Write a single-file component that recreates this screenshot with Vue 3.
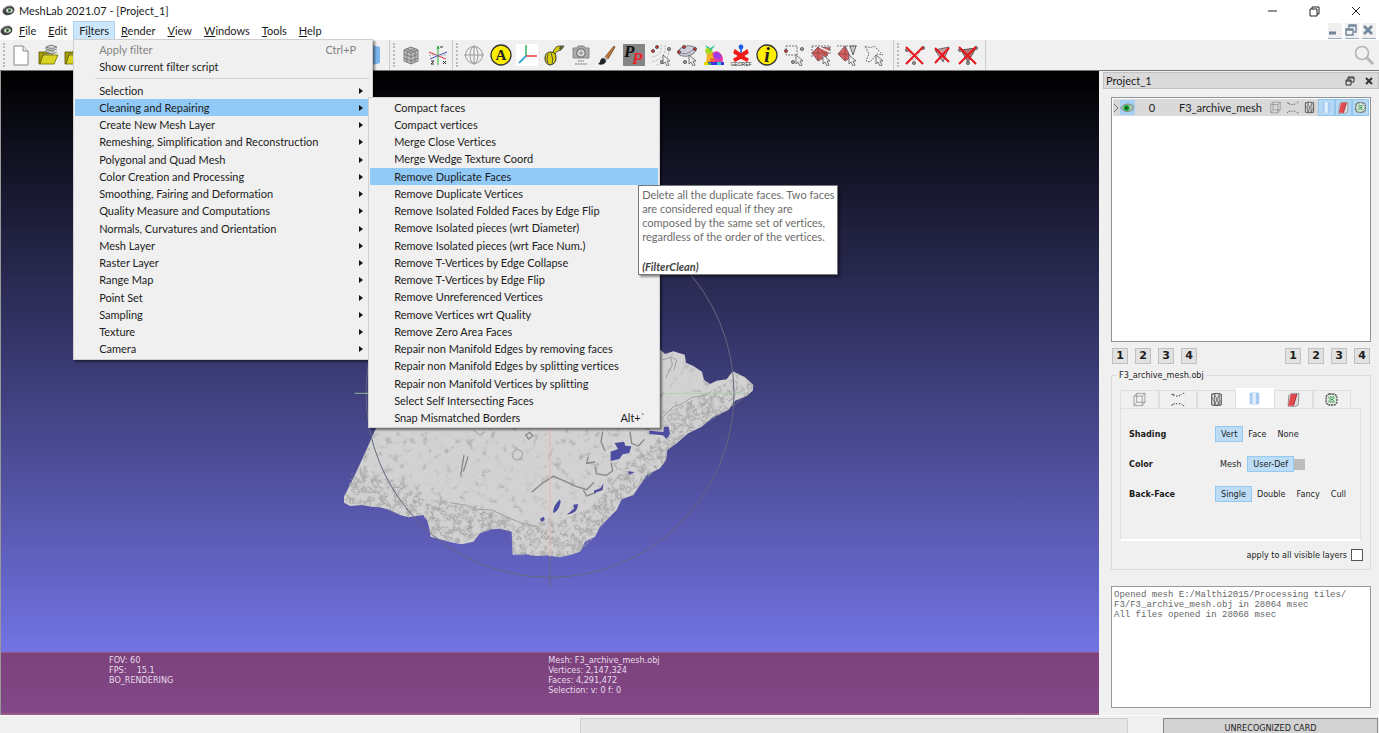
<script setup>
import { ref } from 'vue'

const menus = [
  { pre: '', key: 'F', post: 'ile' },
  { pre: '', key: 'E', post: 'dit' },
  { pre: 'Fi', key: 'l', post: 'ters', open: true },
  { pre: '', key: 'R', post: 'ender' },
  { pre: '', key: 'V', post: 'iew' },
  { pre: '', key: 'W', post: 'indows' },
  { pre: '', key: 'T', post: 'ools' },
  { pre: '', key: 'H', post: 'elp' },
]

const filterGroups = [
  'Selection', 'Cleaning and Repairing', 'Create New Mesh Layer',
  'Remeshing, Simplification and Reconstruction', 'Polygonal and Quad Mesh',
  'Color Creation and Processing', 'Smoothing, Fairing and Deformation',
  'Quality Measure and Computations', 'Normals, Curvatures and Orientation',
  'Mesh Layer', 'Raster Layer', 'Range Map', 'Point Set', 'Sampling', 'Texture', 'Camera',
]

const cleaning = [
  'Compact faces', 'Compact vertices', 'Merge Close Vertices', 'Merge Wedge Texture Coord',
  'Remove Duplicate Faces', 'Remove Duplicate Vertices',
  'Remove Isolated Folded Faces by Edge Flip', 'Remove Isolated pieces (wrt Diameter)',
  'Remove Isolated pieces (wrt Face Num.)', 'Remove T-Vertices by Edge Collapse',
  'Remove T-Vertices by Edge Flip', 'Remove Unreferenced Vertices',
  'Remove Vertices wrt Quality', 'Remove Zero Area Faces',
  'Repair non Manifold Edges by removing faces', 'Repair non Manifold Edges by splitting vertices',
  'Repair non Manifold Vertices by splitting', 'Select Self Intersecting Faces',
  'Snap Mismatched Borders',
]

const cursor = '<path d="M13 11v9l2-2 2 4 2-1-2-4h3z" fill="#eee" stroke="#666" stroke-width=".9"/>'
const dot = (x, y, c = '#999') => `<circle cx="${x}" cy="${y}" r="1.6" fill="${c}" stroke="#444" stroke-width=".7"/>`
const cross = '<path d="M2 3l17 17M19 3L2 20" stroke="#e8141c" stroke-width="2" fill="none"/>'
const folder = '<path d="M2 8h7l2-2h5v4H6L3 20H2z" fill="#a8a000" stroke="#555200" stroke-width=".8"/><path d="M6 11h15l-4 9H3z" fill="#d9d322" stroke="#6d6900" stroke-width=".8"/>'

const art = {
  doc: '<path d="M4 2h9l5 5v14H4z" fill="#fff" stroke="#888"/><path d="M13 2v5h5" fill="#eee" stroke="#888"/>',
  open: folder,
  openStack: folder + '<path d="M9 3l5-2 6 2-5 2zM9 3v2l6 2 5-2M9 6v2l6 2 5-2" fill="#ccc" stroke="#777" stroke-width=".9"/>',
  cylinder: '<path d="M3 3q8-3 16 0v16q-8 3-16 0z" fill="#7db4ec"/><path d="M3 3q8-3 9-1v19q-6 0-9-2z" fill="#b5d6f7"/>',
  layers: '<path d="M4 5l7-2 7 2v12l-7 3-7-3z" fill="#bbb"/><path d="M4 6l7 3 7-3M4 10l7 3 7-3M4 14l7 3 7-3M4 6v11l7 3 7-3V6M11 9v11M7 7v11M15 7v11M4 6l7-3 7 3M7 5l8 3M15 5L7 8" fill="none" stroke="#777" stroke-width=".9"/>',
  axis: '<path d="M11 21V3m-1 2l1-3 1 3" stroke="#2fae3a" fill="none"/><path d="M2 8l17 7" stroke="#d82c3a"/><path d="M20 8L3 15" stroke="#4050c8"/><path d="M2 11h18" stroke="#aaa" stroke-dasharray="2 1"/><path d="M13 3h3M4 17h3l-3 3h3M16 17l3 3m0-3l-3 3" stroke="#333" fill="none"/>',
  globe: '<g fill="none" stroke="#999"><circle cx="11" cy="11" r="8.5"/><ellipse cx="11" cy="11" rx="4" ry="8.5"/><path d="M1 11h20M11 1v20"/></g>',
  label: '<circle cx="11" cy="11" r="10" fill="#ffee00" stroke="#333" stroke-width="1.3"/><text x="11" y="16" text-anchor="middle" font-family="Liberation Serif, serif" font-weight="bold" font-size="15" fill="#222">A</text>',
  axes: '<path fill="#fff" d="M0 0h22v22H0z"/><path d="M10 1v11" stroke="#3dba6b" stroke-width="1.6"/><path d="M10 12h11" stroke="#ee4444" stroke-width="1.6"/><path d="M10 12l-7 7" stroke="#35a5dc" stroke-width="1.8"/>',
  tape: '<path d="M10 9q1-6 6-7h5l-3 4q-4 0-6 4z" fill="#d9cf00" stroke="#333" stroke-width=".8"/><path d="M17 2h4l-3 4-2-1z" fill="#5d5a30"/><path d="M2 14q0-6 6-6 5 0 5 6 0 6-6 7-5-1-5-7z" fill="#d9cf00" stroke="#333"/><path d="M5 10q-2 5 0 10M8 9q3 6 1 12" stroke="#555" fill="none"/>',
  camera: '<path d="M3 4h4l1-2h6l1 2h4v10H3z" fill="#aaa" stroke="#888"/><circle cx="11" cy="9" r="4.2" fill="#ddd" stroke="#777" stroke-width="1.2"/><circle cx="11" cy="9" r="1.8" fill="#999"/><path d="M8 17h6M5 20h12" stroke="#777" stroke-width="1.2" stroke-dasharray="2 .6"/>',
  brush: '<path d="M18 2l1 1-7 12-3-2z" fill="#c07838" stroke="#6c3b15" stroke-width=".8"/><path d="M9 12l3 3-2 2-3-2z" fill="#bbb"/><path d="M7 14q3 1 3 4-3 4-8 2 2-1 2-3 1-3 3-3z" fill="#222"/>',
  pp: '<path fill="#858585" d="M0 0h22v22H0z"/><text x="1" y="13" font-family="Liberation Serif, serif" font-style="italic" font-weight="bold" font-size="17" fill="#111">P</text><text x="9" y="20" font-family="Liberation Serif, serif" font-style="italic" font-weight="bold" font-size="17" fill="#e8262c">P</text>',
  pick: '<g fill="none" stroke="#aaa" stroke-width=".8" stroke-dasharray="2 1"><path d="M11 1q2 11-10 12M15 1q2 14-14 17M19 6q-1 13-13 15"/></g>' + dot(3, 7, '#c33') + dot(7, 3, '#c33') + dot(19, 5) + dot(12, 18) + cursor,
  pickLine: '<ellipse cx="11" cy="7" rx="9" ry="5" fill="#ccd" stroke="#888" transform="rotate(-12 11 7)"/><path d="M2 8q9 5 17-4" stroke="#888" fill="none"/>' + dot(3, 8, '#c33') + dot(8, 3, '#c33') + dot(19, 5, '#c33') + dot(9, 18) + cursor,
  bunny: '<path d="M8 10q4-4 8-2 4 3 4 8l-1 3H7z" fill="#e03ca8"/><path d="M11 9q5-2 7 3l-1 3-6-1z" fill="#9a3ce8"/><path d="M2 7q1-4 5-3l3 3-1 4-5 0z" fill="#a8d820"/><path d="M6 5l6-4-1 2-4 4zM4 4L2 1l5 3z" fill="#1fc48c"/><path d="M4 10l5-1 2 6-5 5H3z" fill="#f0b020"/><path d="M8 14l4 1-1 4H6z" fill="#f06030"/><path d="M1 18h20v3H1z" fill="#3a32e0"/><path d="M1 18h4v3H1z" fill="#e5d800"/><path d="M5 19h3v2H5z" fill="#38c848"/><path d="M14 18h4v3h-4z" fill="#28c8c8"/>',
  georef: '<circle cx="11" cy="3" r="2.4" fill="#1d5be6"/><path d="M11 5v4" stroke="#1d5be6" stroke-width="1.6"/><path d="M5 6l6 4 6-4 1 3-5 3 5 3-1 2-6-3-6 3-1-2 5-3-5-3z" fill="#f01818" stroke="#f01818" stroke-width="1.4"/><text x="11" y="22" text-anchor="middle" font-family="Liberation Sans, sans-serif" font-size="5" fill="#222">GEOREF</text>',
  info: '<circle cx="11" cy="11" r="10" fill="#ffee00" stroke="#333" stroke-width="1.3"/><text x="11" y="18" text-anchor="middle" font-family="Liberation Serif, serif" font-style="italic" font-weight="bold" font-size="20" fill="#222">i</text>',
  selVert: '<path d="M3 2h11v9H3z" fill="none" stroke="#777" stroke-dasharray="2 1"/>' + dot(3, 7, '#c33') + dot(19, 5) + dot(10, 18) + cursor,
  selFace: '<path d="M2 2h18v9M2 2v12" fill="none" stroke="#777" stroke-dasharray="2 1"/><path d="M2 9l6-6 12 1-3 8-9 5z" fill="#d86060" stroke="#6b4b4b" stroke-width=".8"/><path d="M9 3l11 5" stroke="#eee" stroke-width="1.4"/><path d="M8 3l9 9M2 9h15M8 17V3" stroke="#844" stroke-width=".8"/>' + cursor,
  selConn: '<path d="M2 10L9 2l4 8 1 4-5 3z" fill="#d86060" stroke="#6b4b4b" stroke-width=".8"/><path d="M2 10h11M9 2v15" stroke="#844" stroke-width=".8"/><path d="M14 2l6 0-3 9z" fill="#ccc" stroke="#666"/><path d="M1 2h20" stroke="#777" stroke-dasharray="2 1"/>' + cursor,
  selLasso: '<path d="M2 2q5 3 9 0l9 9-6-1-7 8-4-1 3-7z" fill="none" stroke="#777" stroke-dasharray="2 1"/>' + cursor,
  delVert: dot(3, 6) + dot(19, 4) + dot(10, 19) + '<path d="M4 6l6 12L18 4" fill="none" stroke="#999" stroke-dasharray="1 1"/>' + cross,
  delFace: '<path d="M4 6l14-3-6 15z" fill="#c99" stroke="#666"/><path d="M4 6l9 6" stroke="#666"/><path d="M4 4l14 14M18 4L4 19" stroke="#e8141c" stroke-width="2"/>',
  delBoth: '<path d="M4 6l15-2-8 14z" fill="#b77" stroke="#555"/>' + dot(3, 6) + dot(19, 4) + dot(11, 19) + cross,
  box: '<g fill="none" stroke="#808080"><path d="M3 6h12v14H3zM7 2h12v13H7zM3 6l4-4M15 6l4-4M3 20l4-5M15 20l4-5"/></g>',
  points: '<path d="M2 3l2 1M5 3l1 3M9 6h2M13 5l2 1M16 3l1 1M20 1v2M2 20l2-2M5 17l2 1M9 16l1 2M13 17h2M17 18l1 1M20 19v2" stroke="#555" stroke-width="1.6"/>',
  wire: '<path d="M4 3q7-2 14 0v16q-7 2-14 0z" fill="#ddd" stroke="#444" stroke-width="1.4"/><path d="M8 3v16M15 3v16M4 7l7 13M8 3l7 16M8 19l7-15M11 20l7-8" fill="none" stroke="#555"/>',
  solid: '<path d="M4 3q7-2 14 0v16q-7 2-14 0z" fill="#a8cbf2"/><path d="M8 2h5v18H8z" fill="#e3f0fd"/>',
  ribbon: '<path d="M4 5l4-3h11l-1 17-4 2H3z" fill="#ddd" stroke="#777"/><path d="M7 3h9L11 20H3z" fill="#e04a50"/><path d="M16 3l-5 17" stroke="#922" stroke-width="1.2"/>',
  edges: '<rect x="3" y="3" width="16" height="16" rx="5" fill="#dcebdc" stroke="#555" stroke-width="2" stroke-dasharray="3 1"/><path d="M6 7l4 4-4 4M16 7l-4 4 4 4M9 6l2 3 3-3M9 16l2-3 3 3M10 11h3" stroke="#35914a" stroke-width="1.4" fill="none"/>',
}

const mainTools = [
  'globe', 'label', 'axes', 'tape', 'camera', 'brush', 'pp', 'pick', 'pickLine', 'bunny',
  'georef', 'info', 'selVert', 'selFace', 'selConn', 'selLasso',
]
const layerModes = ['box', 'points', 'wire', 'solid', 'ribbon', 'edges']

const options = [
  { name: 'Shading', values: ['Vert', 'Face', 'None'], chosen: 'Vert' },
  { name: 'Color', values: ['Mesh', 'User-Def'], chosen: 'User-Def', swatch: true },
  { name: 'Back-Face', values: ['Single', 'Double', 'Fancy', 'Cull'], chosen: 'Single' },
]
const applyAll = ref(false)
const log = ref('Opened mesh E:/Malthi2015/Processing tiles/\nF3/F3_archive_mesh.obj in 28064 msec\nAll files opened in 28068 msec')
</script>

<template>
  <div class="window">
    <header class="titlebar">
      <svg class="logo" viewBox="0 0 14 14"><ellipse cx="7" cy="7" rx="6.5" ry="5" fill="#444" transform="rotate(-20 7 7)" /><ellipse cx="8" cy="7" rx="3.6" ry="2.4" fill="#cfe5cf" /><circle cx="8" cy="7" r="1.5" fill="#2d5b35" /><path d="M1 6q4-5 10-4" stroke="#aaa" fill="none" /></svg>
      <h1>MeshLab 2021.07 - [Project_1]</h1>
      <div class="win-buttons">
        <button aria-label="Minimize"><svg viewBox="0 0 12 12"><path d="M2 6h9" /></svg></button>
        <button aria-label="Restore"><svg viewBox="0 0 12 12"><path d="M2 4h7v7H2zM4 4V2h7v7H9" /></svg></button>
        <button aria-label="Close"><svg viewBox="0 0 12 12"><path d="M2 2l8 8M10 2l-8 8" /></svg></button>
      </div>
    </header>

    <nav class="menubar">
      <svg class="logo" viewBox="0 0 14 14"><ellipse cx="7" cy="7" rx="6.5" ry="5" fill="#444" transform="rotate(-20 7 7)" /><ellipse cx="8" cy="7" rx="3.6" ry="2.4" fill="#cfe5cf" /><circle cx="8" cy="7" r="1.5" fill="#2d5b35" /><path d="M1 6q4-5 10-4" stroke="#aaa" fill="none" /></svg>
      <ul class="menus">
        <li v-for="m in menus" :key="m.post">
          <button class="menu" :class="{ open: m.open }">{{ m.pre }}<u>{{ m.key }}</u>{{ m.post }}</button>
          <div v-if="m.open" class="popup filters">
            <button class="item" disabled>Apply filter<kbd>Ctrl+P</kbd></button>
            <button class="item">Show current filter script</button>
            <hr />
            <ul class="entries">
              <li v-for="g in filterGroups" :key="g">
                <button class="item" :class="{ lit: g === 'Cleaning and Repairing' }">{{ g }}<i class="arrow"></i></button>
              </li>
            </ul>
            <div class="popup sub">
              <ul class="entries">
                <li v-for="c in cleaning" :key="c">
                  <button class="item" :class="{ lit: c === 'Remove Duplicate Faces' }">{{ c }}<kbd v-if="c === 'Snap Mismatched Borders'">Alt+`</kbd></button>
                </li>
              </ul>
              <div class="tooltip" role="tooltip">
                <p>Delete all the duplicate faces. Two faces<br />are considered equal if they are<br />composed by the same set of vertices,<br />regardless of the order of the vertices.</p>
                <p><strong>(FilterClean)</strong></p>
              </div>
            </div>
          </div>
        </li>
      </ul>
      <div class="mdi">
        <button aria-label="Minimize project"><svg viewBox="0 0 13 14"><path d="M1 10h7" stroke-width="3" /></svg></button>
        <button aria-label="Restore project"><svg viewBox="0 0 13 14"><path d="M1 6h7v6H1zM1 7h7M4 5V2h7v7H9M4 3h7" stroke-width="1.4" /></svg></button>
        <button aria-label="Close project"><svg viewBox="0 0 13 14"><path d="M2 3l8 8M10 3l-8 8" stroke-width="2.6" /></svg></button>
      </div>
    </nav>

    <div class="toolbar">
      <div class="tools files">
        <button v-for="n in ['doc', 'openStack', 'open']" :key="n" class="tool" :aria-label="n"><svg viewBox="0 0 22 22" v-html="art[n]"></svg></button>
        <button class="tool last" aria-label="cylinder"><svg viewBox="0 0 22 22" v-html="art.cylinder"></svg></button>
      </div>
      <div class="tools view">
        <button v-for="n in ['layers', 'axis']" :key="n" class="tool" :aria-label="n"><svg viewBox="0 0 22 22" v-html="art[n]"></svg></button>
      </div>
      <div class="tools main">
        <button v-for="n in mainTools" :key="n" class="tool" :aria-label="n"><svg viewBox="0 0 22 22" v-html="art[n]"></svg></button>
      </div>
      <div class="tools">
        <button v-for="n in ['delVert', 'delFace', 'delBoth']" :key="n" class="tool" :aria-label="n"><svg viewBox="0 0 22 22" v-html="art[n]"></svg></button>
      </div>
      <button class="search" aria-label="Search"><svg viewBox="0 0 22 22"><circle cx="9" cy="9" r="6.5" fill="none" stroke="#b4b4b4" stroke-width="1.6" /><path d="M14 14l6 6" stroke="#b4b4b4" stroke-width="3" /></svg></button>
    </div>

    <main class="work">
      <section class="viewport">
        <svg class="scene" viewBox="0 0 1290 960">
          <defs>
            <filter id="fine" x="0" y="0" width="1" height="1">
              <feTurbulence type="fractalNoise" baseFrequency=".045" numOctaves="5" seed="7" />
              <feColorMatrix values="0 0 0 0 .45 0 0 0 0 .45 0 0 0 0 .45 1 0 0 0 0" />
              <feComponentTransfer><feFuncA type="table" tableValues="0 0 0 0 0 0 0 0 0 .05 .15 .5 .8 .9 .9 .9 .9" /></feComponentTransfer>
              <feComposite in2="SourceGraphic" operator="in" />
            </filter>
            <filter id="rough" x="0" y="0" width="1" height="1">
              <feTurbulence type="fractalNoise" baseFrequency=".05" numOctaves="4" seed="3" />
              <feColorMatrix values="0 0 0 0 .35 0 0 0 0 .35 0 0 0 0 .35 1 0 0 0 0" />
              <feComponentTransfer><feFuncA type="table" tableValues="0 0 0 0 0 .05 .2 .8 .15 .05 .2 .6 .6" /></feComponentTransfer>
              <feComposite in2="SourceGraphic" operator="in" />
            </filter>
          </defs>
          <path id="slab" class="rock" d="M110 500L70 590 40 655 12 710 12 728 30 738 65 735 95 740 120 742 150 750 180 765 205 772 250 765 262 782 268 805 272 830 300 838 340 848 365 853 400 845 420 820 450 808 480 806 515 815 518 885 555 882 590 888 620 886 660 892 690 885 720 875 735 845 765 830 780 800 800 780 830 750 845 718 880 705 900 675 920 645 960 625 978 600 982 570 1010 550 1045 520 1085 500 1120 470 1165 450 1185 422 1220 408 1238 392 1240 375 1215 352 1178 334 1160 358 1130 362 1110 372 1092 360 1086 335 1060 318 1038 308 1034 284 1000 274 975 282 958 266 900 300 800 480z" />
          <use href="#slab" filter="url(#fine)" />
          <path filter="url(#rough)" d="M12 728L35 640 70 615 130 650 200 670 240 715 330 725 390 745 480 760 540 790 620 800 690 770 760 740 830 650 880 600 960 530 990 450 1040 430 1090 400 1180 360 1240 375 1238 392 1165 450 1045 520 982 570 978 600 900 675 845 718 765 830 720 875 660 892 518 885 515 815 480 806 420 820 365 853 272 830 250 765 205 772 120 742z" />
          <g class="cracks">
            <path d="M575 697l30-26 35-22 38 16 30 14 32 10 22-22M372 585l-10 62M384 590l-14 45M557 525l12-8 9 10-12 10zM788 515l-5 30 12 28M870 515l5 35 20 8 18-20M745 590l-5 20 25-4M765 620l5 22 30 4 18-14-5-24M730 690l10 18 28-10" />
            <path class="faint" d="M330 728l50 8 30 12 45 2 40 18 45 20 50 12M400 510l20 15 15-10M970 470l30-30 25-8 30-20 40-5 20-14M520 575l14-8 14 10-3 18-17 6-10-8zM967 300l25-8 5 22-20 40M990 290l20 10-8 30" />
          </g>
          <path class="holes" d="M928 512l42 4 2-16 14 0 4 22-10 14-12-10-40-4zM812 575l22-8-10-18 28-4 4 12 18 2-6 20-20 4-10 14-26 6zM864 634l20 2-16 8zM640 760q-3-20 20-42l2 8q-6 28-22 34zM680 764l22-18-2-12 14-2q0 28-34 32zM600 776l12-6 2 10-10 6zM762 692l20-8 8-14-2 20-26 10z" />
          <circle class="orbit" cx="630" cy="400" r="552" />
          <path class="orbit" d="M630 890v90" />
          <path d="M630 505v385" stroke="#eab8b8" stroke-width="3" />
          <path d="M44 400h45M960 400h250" stroke="#a6d3a6" stroke-width="3" opacity=".8" />
        </svg>
        <div class="hud">
          <p>FOV: 60<br />FPS: &nbsp;&nbsp; 15.1<br />BO_RENDERING</p>
          <p>Mesh: F3_archive_mesh.obj<br />Vertices: 2,147,324<br />Faces: 4,291,472<br />Selection: v: 0 f: 0</p>
        </div>
      </section>

      <aside class="dock">
        <header class="dock-title">
          <h2>Project_1</h2>
          <button aria-label="Float"><svg viewBox="0 0 10 10"><path d="M1 4h5v5H1zM1 5h5M3 4V1h6v5H6M3 2h6" /></svg></button>
          <button aria-label="Close dock"><svg viewBox="0 0 10 10"><path d="M2 2l6 6M8 2L2 8" stroke-width="2" /></svg></button>
        </header>
        <div class="dock-body">
          <div class="tree">
            <div class="layer">
              <svg class="chev" viewBox="0 0 6 10"><path d="M1 1l4 4-4 4" fill="none" stroke="#777" /></svg>
              <button class="eye" aria-label="Toggle visibility"><svg viewBox="0 0 14 14"><path d="M0 7q6-7 13-2l-1 4q-6 4-12-2z" fill="#a8c8a8" stroke="#777" stroke-width=".8" /><circle cx="6" cy="7" r="3" fill="#1cae3c" /><circle cx="6" cy="7" r="1.4" fill="#114d1d" /></svg></button>
              <span class="id">0</span>
              <span class="name">F3_archive_mesh</span>
              <button v-for="(n, i) in layerModes" :key="n" class="mode" :class="{ on: i > 2 }" :aria-label="n"><svg viewBox="0 0 22 22" v-html="art[n]"></svg></button>
            </div>
          </div>
          <div class="slots">
            <div v-for="s in 2" :key="s"><button v-for="n in 4" :key="n">{{ n }}</button></div>
          </div>
          <fieldset class="panel">
            <legend>F3_archive_mesh.obj</legend>
            <div class="tabs">
              <button v-for="n in layerModes" :key="n" :class="{ active: n === 'solid' }" :aria-label="n"><svg viewBox="0 0 22 22" v-html="art[n]"></svg></button>
            </div>
            <div class="pane">
              <div v-for="o in options" :key="o.name" class="option">
                <strong>{{ o.name }}</strong>
                <button v-for="v in o.values" :key="v" :class="{ chosen: v === o.chosen }">{{ v }}</button>
                <i v-if="o.swatch" class="swatch"></i>
              </div>
            </div>
            <label class="apply">apply to all visible layers<input v-model="applyAll" type="checkbox" /></label>
          </fieldset>
          <textarea v-model="log" class="log" readonly aria-label="Log"></textarea>
        </div>
      </aside>
    </main>

    <footer class="status">
      <div class="progress"></div>
      <button class="card">UNRECOGNIZED CARD</button>
    </footer>
  </div>
</template>

<style>
body { margin: 0; overflow: hidden; }
</style>

<style scoped>
* { box-sizing: border-box; margin: 0; padding: 0; }
ul { list-style: none; }
button { border: 0; background: none; font: inherit; font-variant-ligatures: none; color: inherit; text-align: left; white-space: nowrap; }
svg { display: block; }
.window {
  height: 100vh; display: flex; flex-direction: column; overflow: hidden;
  background: #f0f0f0; color: #1c1c1c; font: 11px/17px Lato, "Open Sans", sans-serif; font-variant-ligatures: none;
}
.titlebar { display: flex; align-items: center; height: 21px; background: #fff; padding-left: 2px; }
.titlebar h1 { font-size: 11px; font-weight: 400; margin-left: 4px; }
.logo { width: 13px; height: 13px; }
.win-buttons { margin-left: auto; display: flex; gap: 30px; padding-right: 17px; }
.win-buttons svg { width: 12px; height: 12px; fill: none; stroke: #222; }
.menubar { display: flex; align-items: center; height: 19px; background: #fff; }
.menus { display: flex; }
.menus > li { position: relative; }
.menu { height: 19px; padding: 0 6px; line-height: 18px; border: 0; }
.menu u { text-underline-offset: 1px; }
.menu.open { background: #cce6fb; box-shadow: inset 0 0 0 1px #a5d2f5; }
.mdi { margin-left: auto; display: flex; gap: 3px; padding-right: 3px; }
.mdi button { width: 14px; height: 16px; background: #f0f0f0; border-bottom: 1px solid #9fb0c4; }
.mdi svg { width: 13px; height: 14px; fill: none; stroke: #71859b; }

.popup { position: absolute; background: #f0f0f0; border: 1px solid #cfcfcf; box-shadow: 2px 2px 2px #0007; padding: 1px; }
.filters { z-index: 5; left: 0; top: 18px; width: 300px; padding-right: 3px; }
.sub { left: 294px; top: 57px; width: 292px; }
.item { display: flex; justify-content: space-between; width: 100%; height: 17px; line-height: 17px; padding: 0 13px 0 24px; }
.entries li:nth-child(4n) .item { height: 18px; }
.item:disabled { color: #838383; }
.item kbd { font: inherit; }
.item.lit { background: #91c9f7; }
.filters hr { border: 0; border-top: 1px solid #d4d4d4; margin: 3px 0 3px 20px; }
.arrow { align-self: center; border: 3px solid transparent; border-left: 4px solid #111; border-right: 0; margin-right: -8px; }
.filters > .entries .item { padding-right: 14px; }
.tooltip {
  position: absolute; left: 269px; top: 87px; width: 200px; padding: 2px 3px 0; background: #fff;
  border: 1px solid #777; box-shadow: 2px 2px 2px #0006; color: #6c6c6c; line-height: 14px; white-space: nowrap;
}
.tooltip p + p { margin-top: 15px; line-height: 15px; font-style: italic; color: #444; }

.toolbar { display: flex; align-items: center; height: 31px; border-bottom: 1px solid #777; }
.tools { display: flex; height: 30px; align-items: center; border-right: 1px solid #ccc; padding: 0 4px 0 7px; position: relative; }
.tools::before { content: ""; position: absolute; left: 3px; top: 3px; bottom: 3px; border-left: 2px dotted #bbb; }
.files { width: 390px; }
.view { padding-right: 1px; }
.main { padding-right: 6px; }
.files .last { margin-left: auto; }
.tool { width: 27px; height: 24px; display: flex; align-items: center; justify-content: center; }
.tool:nth-child(3n) { width: 26px; }
.tool svg { width: 22px; height: 22px; flex: none; }
.search { margin-left: auto; padding-right: 4px; }
.search svg { width: 22px; height: 22px; }

.work { flex: 1; display: flex; min-height: 0; }
.viewport { flex: 1; position: relative; overflow: hidden; background: linear-gradient(#000, #7f7ffc); border-left: 1px solid #999; }
.scene { position: absolute; left: 339px; top: 189px; width: 430px; height: 320px; overflow: visible; }
.rock { fill: #d2d2d2; }
.cracks { fill: none; stroke: #888; stroke-width: 4; }
.cracks .faint { stroke: #a0a0a0; stroke-width: 3; }
.holes { fill: #4c4ca0; }
.orbit { fill: none; stroke: #66667e; stroke-width: 3; }
.hud {
  position: absolute; inset: auto 0 0; height: 63px; display: grid; grid-template-columns: 40% 1fr; padding: 2px 0 0;
  background: linear-gradient(#7b427c, #824888); border: solid #9a5a86; border-width: 1px 0 2px;
  color: #e9dcea; font: 9px/10px "DejaVu Sans Condensed", "DejaVu Sans", sans-serif;
  grid-template-columns: 108px 40% 1fr;
}
.hud p:first-child { grid-column: 2; }

.dock { width: 280px; padding: 1px 0 0 4px; display: flex; flex-direction: column; background: #f0f0f0; }
.dock-title { display: flex; align-items: center; height: 17px; background: #dadada; border: 1px solid #c2c2c2; padding: 0 4px 0 2px; gap: 9px; }
.dock-title h2 { flex: 1; font-size: 11px; font-weight: 400; line-height: 15px; }
.dock-title svg { width: 10px; height: 10px; fill: none; stroke: #333; }
.dock-body { flex: 1; display: flex; flex-direction: column; padding: 8px 8px 7px; }
.tree { height: 245px; background: #fff; border: 1px solid #8b949c; padding: 1px; }
.layer { display: flex; align-items: center; height: 17px; background: #d9d9d9; }
.chev { width: 6px; height: 10px; }
.eye { width: 15px; height: 15px; background: #a8d0f2; margin-left: 1px; }
.eye svg { width: 15px; height: 14px; }
.id { width: 34px; text-align: center; }
.name { flex: 1; text-align: right; padding-right: 5px; }
.mode { width: 17px; height: 17px; display: grid; place-items: center; }
.mode svg { width: 13px; height: 13px; }
.mode.on { background: #b5d8f5; box-shadow: inset 0 0 0 1px #93c6ef; }
.slots { display: flex; justify-content: space-between; padding: 6px 1px 0; }
.slots div { display: flex; gap: 7px; }
.slots button { width: 16px; height: 16px; background: #e1e1e1; border: 1px solid #c0c0c0; text-align: center; font: bold 11px/14px "DejaVu Sans", sans-serif; }
.panel { position: relative; min-width: 0; margin-top: 5px; border: 1px solid #dcdcdc; padding: 7px 9px 0 8px; height: 201px; }
.panel, .status { font: 9px/12px "DejaVu Sans Condensed", "DejaVu Sans", sans-serif; }
.panel legend { margin-left: -3px; padding: 0 2px; }
.tabs { display: flex; align-items: flex-end; height: 20px; padding: 0 10px 0 0; }
.tabs button { flex: 1; height: 18px; display: grid; place-items: center; border: 1px solid #dedede; border-bottom: 0; }
.tabs svg { width: 15px; height: 15px; }
.tabs .active { background: #fff; height: 20px; border-color: #fff; }
.pane { height: 133px; border: 1px solid #e0e0e0; border-bottom: 2px solid #fff; padding: 17px 8px; display: flex; flex-direction: column; gap: 14px; }
.option { display: flex; align-items: center; height: 16px; }
.option strong { flex: none; width: 86px; }
.option button { padding: 0 5px 0 4px; height: 16px; border: 1px solid transparent; }
.option .chosen { padding: 0 5px; background: #bddcf5; border-color: #96c9ef; }
.swatch { width: 11px; height: 11px; background: #bdbdbd; }
.apply { display: flex; justify-content: flex-end; align-items: center; gap: 4px; margin: 8px -2px 0 0; }
.apply input { appearance: none; width: 12px; height: 12px; background: #fff; border: 1px solid #555; }
.log { flex: 1; margin-top: 16px; width: 100%; resize: none; outline: 0; border: 1px solid #999; background: #fff; padding: 3px 2px; color: #666; font: 9px/10px "Liberation Mono", monospace; white-space: pre; overflow: hidden; }

.status { display: flex; align-items: flex-start; height: 18px; padding: 2px 1px 0 0; border-top: 1px solid #fafafa; }
.progress { margin-left: auto; width: 548px; height: 18px; background: #e6e6e6; border: 1px solid #cfcfcf; }
.card { margin-left: 35px; width: 215px; height: 20px; text-align: center; background: #d2d2d2; border: 1px solid #888; }
</style>
